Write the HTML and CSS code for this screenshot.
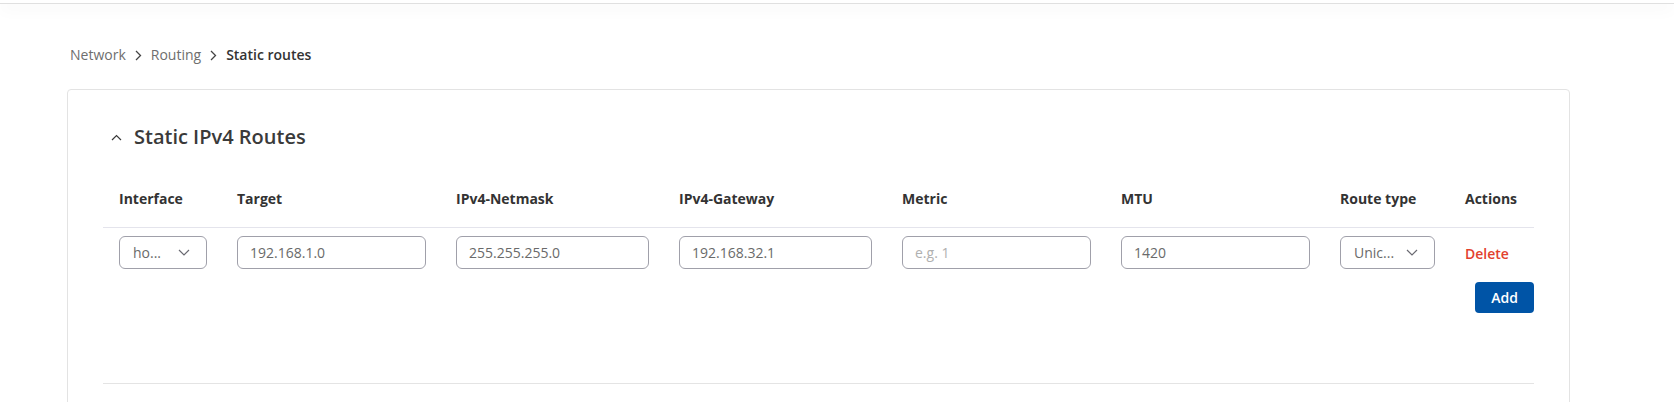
FILE: index.html
```html
<!DOCTYPE html>
<html lang="en">
<head>
    <meta charset="UTF-8">
    <meta name="viewport" content="width=device-width, initial-scale=1.0">
    <title>Static routes</title>
    <link rel="stylesheet" href="styles.css">
</head>
<body>
    <div class="topbar"></div>

    <main class="page">
        <nav class="breadcrumb">
            <a href="#">Network</a>
            <svg class="sep" width="7" height="11" viewBox="0 0 7 11"><path d="M1 1 L5.5 5.5 L1 10" fill="none" stroke="#444" stroke-width="1.3"/></svg>
            <a href="#">Routing</a>
            <svg class="sep" width="7" height="11" viewBox="0 0 7 11"><path d="M1 1 L5.5 5.5 L1 10" fill="none" stroke="#444" stroke-width="1.3"/></svg>
            <span class="current">Static routes</span>
        </nav>

        <section class="card">
            <h2 class="card-title">
                <svg class="collapse-icon" width="11" height="7" viewBox="0 0 11 7">
                    <path d="M1 6 L5.5 1.5 L10 6" fill="none" stroke="#3a3a3a" stroke-width="1.2"/>
                </svg>
                Static IPv4 Routes
            </h2>

            <table class="routes">
                <colgroup>
                    <col style="width: 118px">
                    <col style="width: 219px">
                    <col style="width: 223px">
                    <col style="width: 223px">
                    <col style="width: 219px">
                    <col style="width: 219px">
                    <col style="width: 125px">
                    <col>
                </colgroup>
                <thead>
                    <tr>
                        <th>Interface</th>
                        <th>Target</th>
                        <th>IPv4-Netmask</th>
                        <th>IPv4-Gateway</th>
                        <th>Metric</th>
                        <th>MTU</th>
                        <th>Route type</th>
                        <th>Actions</th>
                    </tr>
                </thead>
                <tbody>
                    <tr>
                        <td>
                            <div class="select">
                                <span>ho...</span>
                                <svg width="12" height="7" viewBox="0 0 12 7"><path d="M1 1 L6 6 L11 1" fill="none" stroke="#6a6a72" stroke-width="1.2"/></svg>
                            </div>
                        </td>
                        <td><input class="field" type="text" value="192.168.1.0"></td>
                        <td><input class="field" type="text" value="255.255.255.0"></td>
                        <td><input class="field" type="text" value="192.168.32.1"></td>
                        <td><input class="field" type="text" placeholder="e.g. 1"></td>
                        <td><input class="field" type="text" value="1420"></td>
                        <td>
                            <div class="select">
                                <span>Unic...</span>
                                <svg width="12" height="7" viewBox="0 0 12 7"><path d="M1 1 L6 6 L11 1" fill="none" stroke="#6a6a72" stroke-width="1.2"/></svg>
                            </div>
                        </td>
                        <td><a href="#" class="delete">Delete</a></td>
                    </tr>
                </tbody>
            </table>

            <div class="table-actions">
                <button class="add-button">Add</button>
            </div>

            <div class="divider"></div>
        </section>
    </main>
</body>
</html>
```

FILE: styles.css
```css
body {
    margin: 0;
    background-color: #fff;
    font-family: 'Open Sans', 'Liberation Sans', sans-serif;
    color: #333;
    overflow: hidden;
}

.topbar {
    height: 3px;
    border-bottom: 1px solid #e0e0e0;
    box-shadow: 0 4px 16px rgba(0, 0, 0, 0.07);
}

.page {
    padding: 0 67px;
}

.breadcrumb {
    margin: 41px 0 0 3px;
    display: flex;
    align-items: center;
    gap: 8px;
    font-size: 14px;
    line-height: 20px;
}

.breadcrumb a {
    color: #6e6e6e;
    text-decoration: none;
}

.breadcrumb .sep {
    margin: 0 1px;
}

.breadcrumb .current {
    color: #333;
    font-weight: 600;
}

.card {
    margin-top: 24px;
    width: 1503px;
    box-sizing: border-box;
    height: 330px;
    border: 1px solid #e3e3e3;
    border-radius: 4px;
    padding: 33px 35px 0;
}

.card-title {
    margin: 0;
    display: flex;
    align-items: center;
    font-size: 20px;
    font-weight: 600;
    line-height: 28px;
    color: #3a3a3a;
}

.collapse-icon {
    margin: 0 12px 0 8px;
}

.routes {
    margin-top: 20px;
    width: 1431px;
    border-collapse: collapse;
    table-layout: fixed;
}

.routes th {
    text-align: left;
    font-size: 14px;
    font-weight: 700;
    line-height: 20px;
    color: #333;
    padding: 18px 16px;
    border-bottom: 1px solid #e4e4ec;
}

.routes td {
    padding: 8px 14px 8px 16px;
    vertical-align: middle;
}

.field {
    width: 100%;
    box-sizing: border-box;
    height: 33px;
    padding: 0 12px;
    border: 1px solid #a0a0aa;
    border-radius: 6px;
    font-family: 'Open Sans', 'Liberation Sans', sans-serif;
    font-size: 14px;
    color: #6a6a6a;
    outline: none;
}

.field::placeholder {
    color: #b0b0b0;
}

.select {
    display: flex;
    align-items: center;
    justify-content: space-between;
    height: 33px;
    box-sizing: border-box;
    padding: 0 16px 0 13px;
    border: 1px solid #a0a0aa;
    border-radius: 6px;
    font-size: 14px;
    color: #6a6a6a;
}

.delete {
    color: #e2412e;
    font-size: 14px;
    font-weight: 600;
    text-decoration: none;
}

.table-actions {
    width: 1431px;
    display: flex;
    justify-content: flex-end;
    margin-top: 5px;
}

.add-button {
    height: 31px;
    padding: 0 16px;
    background-color: #0054a6;
    color: #fff;
    border: none;
    border-radius: 4px;
    font-family: 'Open Sans', 'Liberation Sans', sans-serif;
    font-size: 14px;
    font-weight: 600;
    cursor: pointer;
}

.divider {
    margin-top: 70px;
    width: 1431px;
    border-top: 1px solid #e4e4e4;
}
```
